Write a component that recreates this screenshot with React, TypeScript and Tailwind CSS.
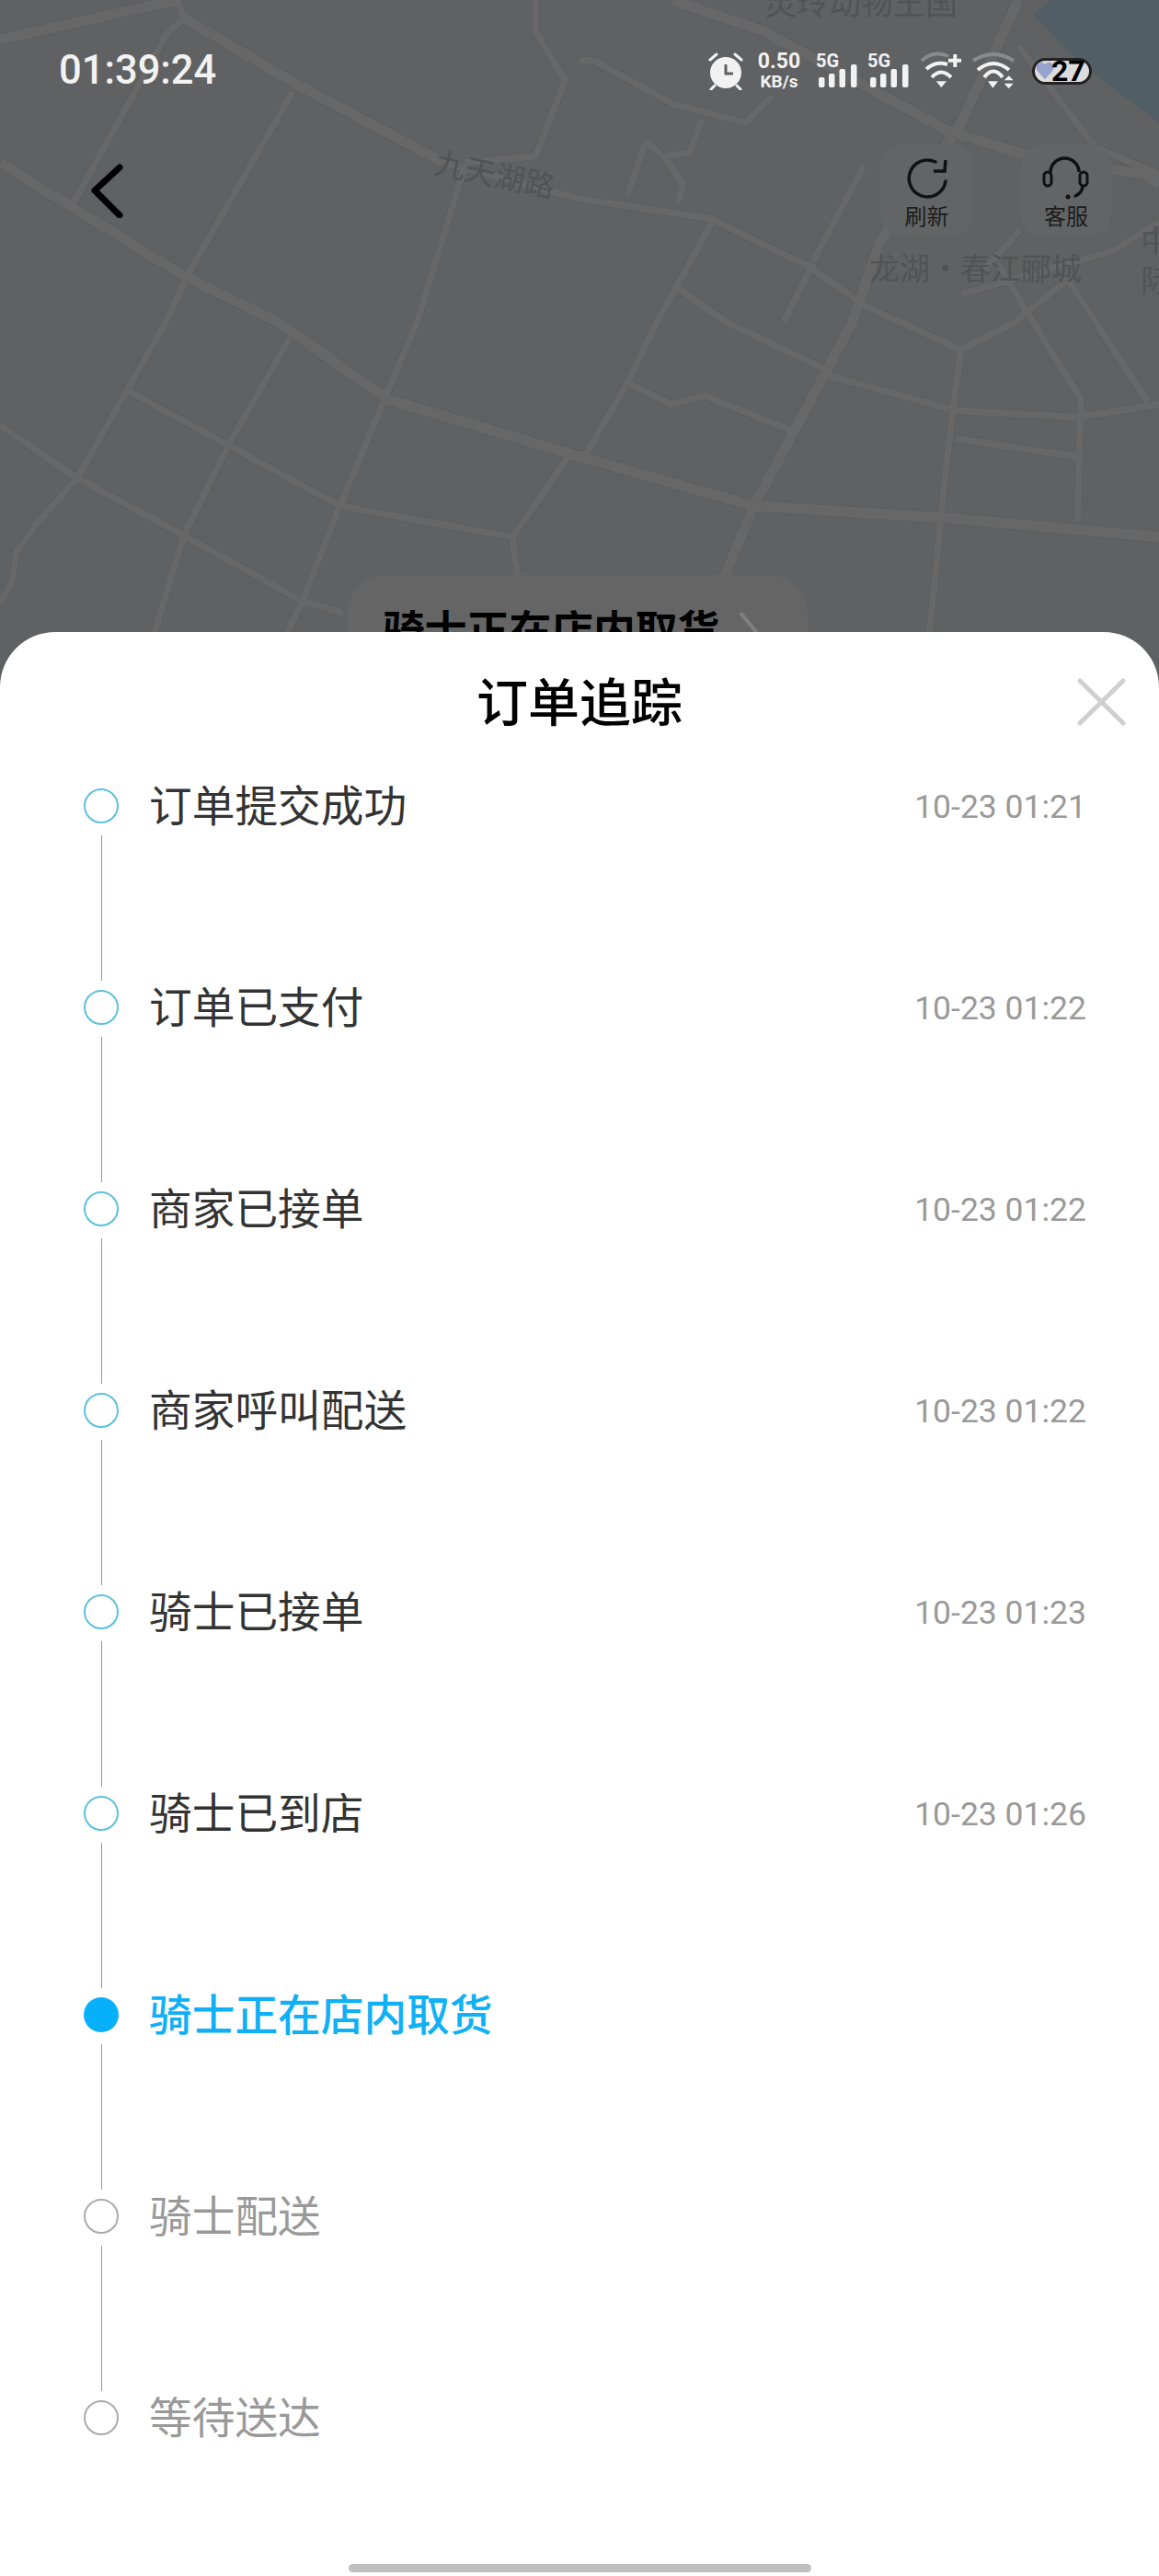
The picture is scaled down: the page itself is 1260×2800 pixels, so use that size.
const majorRoads = [
  "0,99 112,168 169,196 236,243 353,278 459,308 573,315 706,327",
  "620,0 585,75 535,149 519,196 459,308 441,351 425,385",
  "409,0 465,19 578,80 634,97 697,106 706,112",
  "0,24 108,0",
  "112,11 180,51 270,99",
];
const minorRoads = [
  "270,99 353,121 432,133 492,162 528,187",
  "108,0 112,11 102,20 45,123",
  "178,56 115,166 101,196 47,291 22,319 10,336 7,355 0,367",
  "0,259 47,291 112,326 184,366 209,373",
  "78,238 139,271 207,308 312,327 346,278 357,276",
  "283,101 254,196 234,243 207,308 184,366 175,385",
  "178,203 139,271 112,326 94,385",
  "312,327 315,350",
  "433,136 400,196 382,233 357,276",
  "382,233 409,246 429,241 479,261 484,266",
  "412,175 442,196 505,226",
  "502,228 582,250 656,254 706,246",
  "528,187 548,196 585,213 618,196 650,170",
  "585,213 580,250 573,312 566,385",
  "607,160 629,196 658,243 656,317",
  "650,170 667,196 699,245",
  "582,267 656,278",
  "353,37 362,37 409,63 454,75 470,58",
  "427,73 420,93 404,95 416,112 413,123",
  "393,86 382,119",
  "393,86 404,95",
  "326,0 326,19 344,49 326,95 283,99",
  "495,160 477,196",
  "526,101 495,159",
  "620,28 667,90 706,106",
  "585,179 677,153 706,135",
  "621,140 596,168",
];

function MapBackdrop() {
  return (
    <svg className="absolute inset-0" width="1260" height="747" viewBox="0 0 1260 747" fill="none">
      <rect width="1260" height="747" fill="#606162" />
      <g transform="scale(1.7857)">
        <path d="M640 0 L629 9 L656 37 L706 75 L706 0 Z" fill="#515e65" />
        {majorRoads.map((p) => (
          <polyline key={p} points={p} stroke="#5b5c5d" strokeWidth="7.2" strokeLinejoin="round" />
        ))}
        {minorRoads.map((p) => (
          <polyline key={p} points={p} stroke="#5b5c5d" strokeWidth="5" strokeLinejoin="round" />
        ))}
        {majorRoads.map((p) => (
          <polyline key={p + "f"} points={p} stroke="#676768" strokeWidth="6.4" strokeLinejoin="round" />
        ))}
        {minorRoads.map((p) => (
          <polyline key={p + "f"} points={p} stroke="#676768" strokeWidth="4.2" strokeLinejoin="round" />
        ))}
      </g>
      <g className="font-['Noto_Sans_CJK_SC',sans-serif]" fill="#515355">
        <text x="470" y="202" fontSize="33" transform="rotate(12 537 200)">九天湖路</text>
        <text x="831" y="16" fontSize="35">灵玲动物王国</text>
        <text x="945" y="304" fontSize="33">龙湖·春江郦城</text>
        <text x="1240" y="274" fontSize="33">中</text>
        <text x="1240" y="317" fontSize="33">际</text>
      </g>
    </svg>
  );
}

function Alarm() {
  return (
    <svg width="40" height="42" viewBox="0 0 40 42" fill="none">
      <circle cx="20" cy="23" r="17" fill="#f2f2f2" />
      <path d="M3 9 L10 3 M30 3 L37 9 M8 37 L4 41 M32 37 L36 41" stroke="#f2f2f2" strokeWidth="3" strokeLinecap="round" />
      <path d="M20 14 V24 H28" stroke="#5f6061" strokeWidth="3" />
    </svg>
  );
}

function Signal() {
  return (
    <svg width="46" height="40" viewBox="0 0 46 40">
      <text x="0" y="16" fontSize="20" fontWeight="700" fill="#f2f2f2" className="font-['Roboto',sans-serif]">5G</text>
      <rect x="3" y="27" width="6.5" height="11" rx="2" fill="#f2f2f2" />
      <rect x="14" y="23" width="6.5" height="15" rx="2" fill="#f2f2f2" />
      <rect x="25.5" y="18" width="6.5" height="20" rx="2" fill="#f2f2f2" />
      <rect x="38" y="13" width="6.5" height="25" rx="2" fill="#f2f2f2" />
    </svg>
  );
}

function WifiPlus() {
  return (
    <svg width="46" height="44" viewBox="0 0 46 44" fill="none">
      <path d="M2 11 Q15 -1 31 6" stroke="#8a8a8a" strokeWidth="4" />
      <path d="M7 20 Q17 11 30 15" stroke="#f2f2f2" strokeWidth="4" />
      <path d="M13 29 Q23 18 34 29" stroke="#f2f2f2" strokeWidth="4" />
      <path d="M17.7 33.3 H29 L23.3 40 Z" fill="#f2f2f2" />
      <path d="M31 10.7 H45 M38.3 4 V18" stroke="#f2f2f2" strokeWidth="4" />
    </svg>
  );
}

function WifiArrows() {
  return (
    <svg width="50" height="44" viewBox="0 0 50 44" fill="none">
      <path d="M3 11 Q25 -3 47 11" stroke="#8a8a8a" strokeWidth="4" />
      <path d="M8 21 Q25 7 42 21" stroke="#f2f2f2" strokeWidth="4" />
      <path d="M15 29 Q25 16 35 29" stroke="#f2f2f2" strokeWidth="4" />
      <path d="M19 33.3 H30 L24.3 40.7 Z" fill="#f2f2f2" />
      <path d="M36.7 32.3 H46.7 L41.7 27.3 Z M36.7 35.7 H46.7 L41.7 41.3 Z" fill="#f2f2f2" />
    </svg>
  );
}

function Battery() {
  return (
    <div className="flex h-[29px] w-[65px] items-center rounded-full border-[3px] border-[#222] bg-[#dcdcdc] pl-[1px]">
      <svg width="20" height="20" viewBox="0 0 24 24" className="shrink-0">
        <path d="M12 23 L2 12 C-2 6 3 0 8 1 C10 1.500 11 3 12 4 C13 3 14 1.500 16 1 C21 0 26 6 22 12 Z" fill="#97a2cf" />
      </svg>
      <span className="-ml-[3px] font-['Roboto',sans-serif] text-[32px] leading-none font-bold text-black">27</span>
    </div>
  );
}

function StatusBar() {
  return (
    <div className="relative flex h-[114px] items-center justify-between pt-[40px] pr-[73px] pl-[64px]">
      <span className="font-['Roboto',sans-serif] text-[43.500px] leading-none font-medium text-[#f2f2f2]">01:39:24</span>
      <div className="flex items-center">
        <Alarm />
        <div className="ml-[13px] flex w-[50px] flex-col items-center font-['Roboto',sans-serif] font-bold text-[#f2f2f2]">
          <span className="text-[23px] leading-[24px]">0.50</span>
          <span className="text-[19px] leading-[20px]">KB/s</span>
        </div>
        <div className="ml-[15px]"><Signal /></div>
        <div className="ml-[10px]"><Signal /></div>
        <div className="ml-[11px]"><WifiPlus /></div>
        <div className="ml-[9px]"><WifiArrows /></div>
        <div className="ml-[17px]"><Battery /></div>
      </div>
    </div>
  );
}

function TopActions() {
  return (
    <div className="relative flex items-start justify-between pt-[43px] pr-[52px] pl-[97px]">
      <svg width="40" height="60" viewBox="0 0 40 60" fill="none" className="mt-[20px]">
        <path d="M33 5 L6 30 L33 57" stroke="#000" strokeWidth="7" strokeLinecap="round" strokeLinejoin="round" />
      </svg>
      <div className="flex gap-[52px]">
        <div className="flex h-[100px] w-[101px] flex-col items-center rounded-[24px] bg-[#636465] pt-[11px]">
          <div className="flex h-[52px] items-center">
            <svg width="48" height="48" viewBox="0 0 48 48" fill="none">
              <path d="M44 27 A20 20 0 1 1 33 6" stroke="#111" strokeWidth="3.5" strokeLinecap="round" />
              <path d="M44 4 L43 16 L31 16" stroke="#111" strokeWidth="3.5" />
            </svg>
          </div>
          <span className="font-['Noto_Sans_CJK_SC',sans-serif] text-[24px] leading-[28px] text-[#1c1c1c]">刷新</span>
        </div>
        <div className="flex h-[100px] w-[98px] flex-col items-center rounded-[24px] bg-[#636465] pt-[11px]">
          <svg width="58" height="52" viewBox="0 0 58 52" fill="none">
            <path d="M12 19 A15.5 15 0 0 1 43 19" stroke="#111" strokeWidth="3.5" />
            <rect x="5" y="19" width="8" height="15" rx="4" stroke="#111" strokeWidth="3" />
            <rect x="44" y="19" width="8" height="15" rx="4" stroke="#111" strokeWidth="3" />
            <path d="M47 35 Q46 42 39 45" stroke="#111" strokeWidth="3.5" strokeLinecap="round" />
            <circle cx="31" cy="46" r="2.500" fill="#111" />
          </svg>
          <span className="font-['Noto_Sans_CJK_SC',sans-serif] text-[24px] leading-[28px] text-[#1c1c1c]">客服</span>
        </div>
      </div>
    </div>
  );
}

type Step = { title: string; time?: string; state: "done" | "active" | "todo" };

const steps: Step[] = [
  { title: "订单提交成功", time: "10-23 01:21", state: "done" },
  { title: "订单已支付", time: "10-23 01:22", state: "done" },
  { title: "商家已接单", time: "10-23 01:22", state: "done" },
  { title: "商家呼叫配送", time: "10-23 01:22", state: "done" },
  { title: "骑士已接单", time: "10-23 01:23", state: "done" },
  { title: "骑士已到店", time: "10-23 01:26", state: "done" },
  { title: "骑士正在店内取货", state: "active" },
  { title: "骑士配送", state: "todo" },
  { title: "等待送达", state: "todo" },
];

function TimelineRow({ step, last }: { step: Step; last: boolean }) {
  const dot =
    step.state === "done"
      ? "border-[2px] border-[#5cc0de] bg-white"
      : step.state === "active"
        ? "bg-[#07b0fb]"
        : "border-[2px] border-[#aaaaaa] bg-white";
  const text =
    step.state === "done"
      ? "text-[#333333]"
      : step.state === "active"
        ? "font-medium text-[#0fb0f5]"
        : "text-[#999999]";
  const line = step.state === "done" ? "bg-[#45b4d6]" : "bg-[#9a9a9a]";
  return (
    <div className={last ? "flex h-[38px] items-start" : "flex h-[219px] items-start"}>
      <div className="flex w-[38px] flex-col items-center">
        <div className={`h-[38px] w-[38px] rounded-full ${dot}`} />
        {!last && <div className={`mt-[13px] h-[158px] w-px ${line}`} />}
      </div>
      <span className={`ml-[33px] mt-[1px] text-[46.700px] leading-[38px] ${text}`}>{step.title}</span>
      {step.time && <span className="ml-auto mt-[1px] text-[35.500px] leading-[38px] text-[#999999]">{step.time}</span>}
    </div>
  );
}

export default function App() {
  return (
    <div className="h-[2800px] w-[1260px] overflow-hidden bg-white font-['Roboto','Noto_Sans_CJK_SC',sans-serif]">
      <div className="relative h-[747px] overflow-hidden">
        <MapBackdrop />
        <StatusBar />
        <TopActions />
        <div className="absolute top-[625px] left-[378px] flex h-[110px] w-[500px] items-start rounded-[40px] bg-[#656566] pt-[39px] pl-[38px]">
          <span className="text-[45.800px] leading-[46px] font-bold text-black">骑士正在店内取货</span>
          <svg width="24" height="50" viewBox="0 0 24 50" fill="none" className="mt-[-1px] ml-[20px]">
            <path d="M3 3 L21 25 L3 47" stroke="#808080" strokeWidth="4" />
          </svg>
        </div>
      </div>
      <div className="relative -mt-[60px] h-[2113px] rounded-t-[60px] bg-white">
        <div className="grid grid-cols-[1fr_auto_1fr] items-center pt-[50px]">
          <div />
          <h1 className="text-[56px] leading-[56px] font-medium text-black">订单追踪</h1>
          <div className="flex justify-end pr-[36px]">
            <svg width="54" height="52" viewBox="0 0 54 52" fill="none" className="-mt-[4px]">
              <path d="M4 3 L51 49 M51 3 L4 49" stroke="#d0d0d0" strokeWidth="5" strokeLinecap="round" />
            </svg>
          </div>
        </div>
        <div className="mt-[64px] pr-[79px] pl-[91px]">
          {steps.map((s, i) => (
            <TimelineRow key={s.title} step={s} last={i === steps.length - 1} />
          ))}
        </div>
        <div className="mx-auto mt-[140px] h-[9px] w-[503px] rounded-full bg-[#bfbfbf]" />
      </div>
    </div>
  );
}
